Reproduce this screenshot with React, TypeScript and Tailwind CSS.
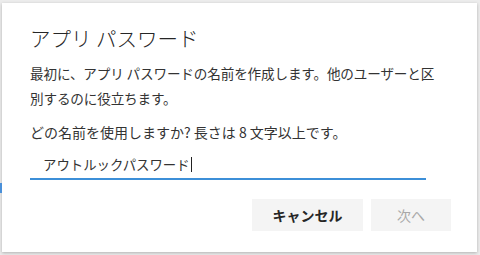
import React from "react";

export default function App() {
  return (
    <div className="w-[480px] h-[255px] bg-[#ececec] overflow-hidden relative" style={{ fontFamily: '"Segoe UI", "Noto Sans CJK JP", sans-serif' }}>
      <div className="absolute left-0 top-[183px] w-[2px] h-[10px] bg-[#4a90d9]" />
      <div className="ml-[2px] mt-[3px] w-[475px] h-[249px] bg-white shadow-[0_1px_3px_rgba(0,0,0,0.25)] flex flex-col px-[28px]">
        <h1 className="mt-[19px] text-[20.5px] leading-[32px] font-light text-[#262626]">アプリ パスワード</h1>
        <p className="mt-[7px] text-[13.6px] leading-[25px] tracking-[-0.15px] text-[#333333] whitespace-nowrap">
          最初に、アプリ パスワードの名前を作成します。他のユーザーと区
          <br />
          別するのに役立ちます。
        </p>
        <p className="mt-[9px] text-[14px] leading-[25px] text-[#333333]">
          どの名前を使用しますか? 長さは 8 文字以上です。
        </p>
        <div className="mt-[5px] w-[396px] border-b-2 border-[#3c8fd8] h-[30px] pl-[13px] flex items-center">
          <span className="text-[13.4px] text-[#333333]">アウトルックパスワード</span>
          <span className="w-px h-[15px] bg-[#222] ml-[1px]" />
        </div>
        <div className="mt-[19px] flex justify-end gap-[8px] mr-[-2px]">
          <button className="w-[111px] h-[32px] bg-[#f4f4f4] text-[14px] font-bold text-[#262626]">キャンセル</button>
          <button className="w-[80px] h-[32px] bg-[#f4f4f4] text-[14px] text-[#a8a8a8]">次へ</button>
        </div>
      </div>
    </div>
  );
}
